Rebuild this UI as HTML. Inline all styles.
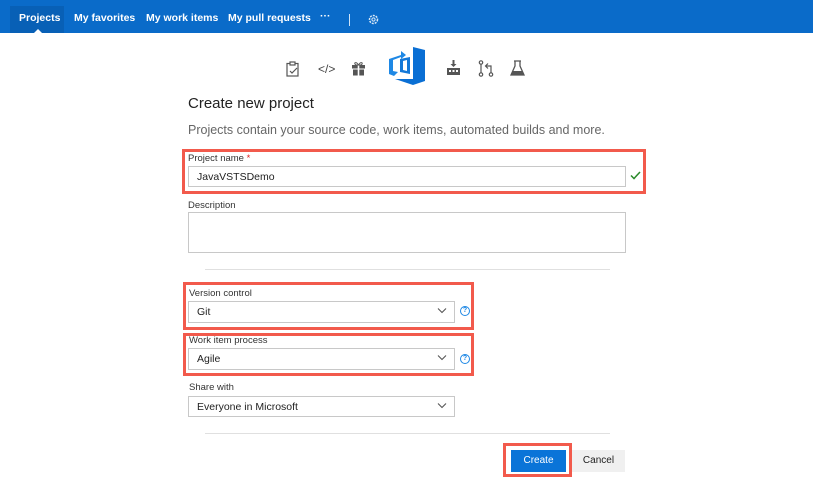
<!DOCTYPE html>
<html><head><meta charset="utf-8"><style>
*{margin:0;padding:0;box-sizing:border-box}
body{width:813px;height:480px;background:#fff;font-family:"Liberation Sans",sans-serif;position:relative;overflow:hidden;color:#222}
.a{position:absolute}
.nav{left:0;top:0;width:813px;height:33px;background:#0a6bc9}
.nv{color:#fff;font-size:10.5px;font-weight:bold;top:12px}
.red{border:3px solid #f25a4c}
.lbl{font-size:9.5px;color:#333}
.inp{border:1px solid #c8c8c8;background:#fff;font-size:10.5px;color:#222;padding-left:8px;display:flex;align-items:center}
.chev{position:absolute;right:7px;top:5px}
.help{width:10px;height:10px;border:1.3px solid #1e88e5;border-radius:50%;color:#1e88e5;font-size:7px;font-weight:bold;text-align:center;line-height:8px}
.hr{height:1px;background:#e0e0e0}
</style></head><body>
<div class="a nav"></div>
<div class="a" style="left:10px;top:6px;width:54px;height:27px;background:#0860b6"></div>
<div class="a" style="left:34px;top:29px;width:0;height:0;border-left:4px solid transparent;border-right:4px solid transparent;border-bottom:4px solid #fff"></div>
<div class="a nv" style="left:19px">Projects</div>
<div class="a nv" style="left:74px">My favorites</div>
<div class="a nv" style="left:146px">My work items</div>
<div class="a nv" style="left:228px">My pull requests</div>
<div class="a nv" style="left:320px;top:10px">···</div>
<div class="a" style="left:349px;top:14px;width:1px;height:12px;background:#cfe3f7"></div>
<svg class="a" style="left:368px;top:14px" width="11" height="11" viewBox="0 0 11 11"><circle cx="5.5" cy="5.5" r="4" fill="none" stroke="#dbe9f7" stroke-width="1.5" stroke-dasharray="2 1"/><circle cx="5.5" cy="5.5" r="1.6" fill="none" stroke="#dbe9f7"/></svg>

<svg class="a" style="left:286px;top:61px" width="14" height="16" viewBox="0 0 14 16" fill="none" stroke="#555" stroke-width="1.2"><rect x="1" y="2.5" width="11" height="12.5"/><rect x="4" y="1" width="5" height="3" fill="#fff"/><path d="M4 10l2 2 5-5"/></svg>
<div class="a" style="left:318px;top:62px;font-size:12px;color:#444">&lt;/&gt;</div>
<svg class="a" style="left:351px;top:61px" width="15" height="15" viewBox="0 0 15 15" fill="#555"><rect x="1" y="4" width="13" height="3.5"/><rect x="2" y="8.5" width="11" height="6"/><rect x="6.7" y="4" width="1.6" height="11" fill="#fff"/><path d="M7.5 4C5 0 2 2 5 4zM7.5 4c2.5-4 5.5-2 2.5 0z" fill="none" stroke="#555"/></svg>
<svg class="a" style="left:387px;top:46px" width="40" height="40" viewBox="0 0 40 40"><path d="M26 1l12 3v31l-12 4L8 33l18 0V1z" fill="#0a6fd4"/><path d="M2 13l12-4 0-4 5 4-5 4v-2l-8 3v11l5 1-4 4-5-2z" fill="#1e88e5"/><path d="M13 13l10-2v17l-10-2z" fill="#1478d8"/><path d="M16 15l4-1v11l-4-1z" fill="#fff"/></svg>
<svg class="a" style="left:446px;top:60px" width="15" height="16" viewBox="0 0 15 16" fill="#555"><path d="M6.5 0h2v4h2l-3 3-3-3h2z"/><rect x="1" y="8" width="13" height="7"/><rect x="3" y="10" width="2" height="2" fill="#fff"/><rect x="6.5" y="10" width="2" height="2" fill="#fff"/><rect x="10" y="10" width="2" height="2" fill="#fff"/></svg>
<svg class="a" style="left:478px;top:60px" width="16" height="17" viewBox="0 0 16 17" fill="none" stroke="#555" stroke-width="1.2"><circle cx="3" cy="2.5" r="1.7"/><circle cx="3" cy="14.5" r="1.7"/><path d="M3 4.2v8.6"/><circle cx="13" cy="14.5" r="1.7"/><path d="M13 12.8V6H8M10 3.5L7.5 6 10 8.5"/></svg>
<svg class="a" style="left:510px;top:60px" width="15" height="17" viewBox="0 0 15 17"><path d="M4 1h7M5 1v5L1 15h13L10 6V1" fill="none" stroke="#555" stroke-width="1.3"/><path d="M2.5 11h10l1.5 4H1z" fill="#555"/></svg>

<div class="a" style="left:188px;top:95px;font-size:15px;color:#222">Create new project</div>
<div class="a" style="left:188px;top:123px;font-size:12.5px;color:#666">Projects contain your source code, work items, automated builds and more.</div>

<div class="a red" style="left:182px;top:149px;width:464px;height:45px"></div>
<div class="a lbl" style="left:188px;top:153px">Project name <span style="color:#d22">*</span></div>
<div class="a inp" style="left:188px;top:166px;width:438px;height:21px">JavaVSTSDemo</div>
<svg class="a" style="left:630px;top:171px" width="11" height="9" viewBox="0 0 11 9"><path d="M1 4.5l3 3 6-6.5" fill="none" stroke="#2a8a2a" stroke-width="1.5"/></svg>

<div class="a lbl" style="left:188px;top:200px">Description</div>
<div class="a inp" style="left:188px;top:212px;width:438px;height:41px"></div>
<div class="a hr" style="left:205px;top:269px;width:405px"></div>

<div class="a red" style="left:183px;top:282px;width:291px;height:48px"></div>
<div class="a lbl" style="left:189px;top:288px">Version control</div>
<div class="a inp" style="left:188px;top:301px;width:267px;height:22px">Git<svg class="chev" width="10" height="7" viewBox="0 0 10 7"><path d="M1 1.5l4 4 4-4" fill="none" stroke="#555" stroke-width="1.1"/></svg></div>
<div class="a help" style="left:460px;top:306px">?</div>

<div class="a red" style="left:183px;top:333px;width:291px;height:43px"></div>
<div class="a lbl" style="left:189px;top:335px">Work item process</div>
<div class="a inp" style="left:188px;top:348px;width:267px;height:22px">Agile<svg class="chev" width="10" height="7" viewBox="0 0 10 7"><path d="M1 1.5l4 4 4-4" fill="none" stroke="#555" stroke-width="1.1"/></svg></div>
<div class="a help" style="left:460px;top:354px">?</div>

<div class="a lbl" style="left:189px;top:382px">Share with</div>
<div class="a inp" style="left:188px;top:396px;width:267px;height:21px">Everyone in Microsoft<svg class="chev" width="10" height="7" viewBox="0 0 10 7"><path d="M1 1.5l4 4 4-4" fill="none" stroke="#555" stroke-width="1.1"/></svg></div>
<div class="a hr" style="left:205px;top:433px;width:405px"></div>

<div class="a red" style="left:503px;top:443px;width:69px;height:34px"></div>
<div class="a" style="left:511px;top:450px;width:55px;height:22px;background:#0a74d8;color:#fff;font-size:10px;text-align:center;line-height:22px">Create</div>
<div class="a" style="left:572px;top:450px;width:53px;height:22px;background:#f0f0f0;color:#222;font-size:10px;text-align:center;line-height:22px">Cancel</div>
</body></html>
